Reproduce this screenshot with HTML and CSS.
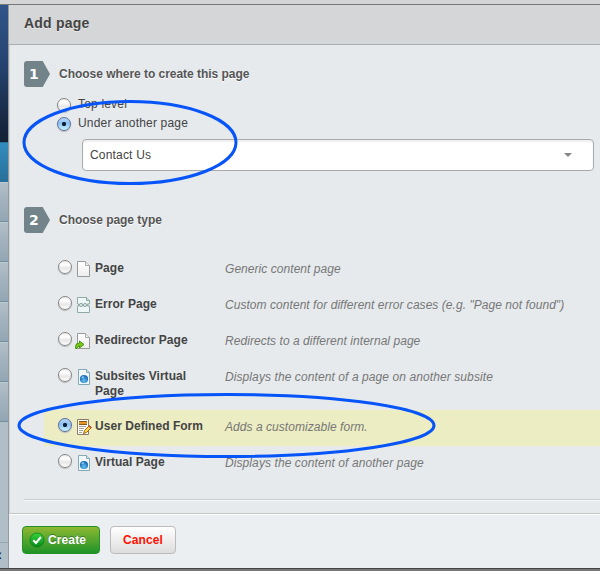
FILE: index.html
```
<!DOCTYPE html>
<html lang="en">
<head>
<meta charset="utf-8">
<title>Add page</title>
<link rel="stylesheet" href="styles.css">
</head>
<body>
<svg class="defs" width="0" height="0">
  <defs>
    <linearGradient id="paper" x1="0" y1="0" x2="0" y2="1"><stop offset="0" stop-color="#fff"/><stop offset="1" stop-color="#eee"/></linearGradient>
    <linearGradient id="green" x1="0" y1="0" x2="0" y2="1"><stop offset="0" stop-color="#35d43b"/><stop offset="1" stop-color="#078b1b"/></linearGradient>
    <radialGradient id="globe" cx=".5" cy=".7"><stop offset="0" stop-color="#5fc8f5"/><stop offset="1" stop-color="#2470b8"/></radialGradient>
    <symbol id="sheet" viewBox="0 0 16 16"><path d="M1.500.5h8l4 4v11h-12z" fill="url(#paper)" stroke="#999"/><path d="M9.500.5v4h4" fill="#eee" stroke="#aaa"/></symbol>
    <symbol id="virtual" viewBox="0 0 16 16"><path d="M2.500.5h8l3 3v12h-11z" fill="#f1f8fa" stroke="#86a8b3"/><path d="M10.500.5v3h3" fill="#d3e5e9" stroke="#86a8b3"/><circle cx="8" cy="10" r="4.100" fill="url(#globe)"/><path d="M5 8.500l2-1.500 1.500 1-1.500 1.500z" fill="#87c4ed"/></symbol>
  </defs>
</svg>
<div class="strip"></div>
<div class="main">
  <div class="menu">
    <div class="brand"></div><div class="item active"></div><div class="item"></div><div class="item"></div><div class="item"></div><div class="item"></div><div class="item"></div><div class="item"></div><div class="rest"></div><div class="toggle"><span>«</span></div>
  </div>
  <div class="dialog">
    <header><h1>Add page</h1></header>
    <form>
      <div class="step"><span class="num">1</span><h2>Choose where to create this page</h2></div>
      <div class="parents">
        <label><i class="radio"></i><span>Top level</span></label>
        <label><i class="radio on"></i><span>Under another page</span></label>
        <div class="select"><span>Contact Us</span><i class="arrow"></i></div>
      </div>
      <div class="step second"><span class="num">2</span><h2>Choose page type</h2></div>
      <div class="types">
        <label class="row"><i class="radio"></i><svg class="icon"><use href="#sheet"/></svg><b>Page</b><em>Generic content page</em></label>
        <label class="row"><i class="radio"></i><svg class="icon" viewBox="0 0 16 16"><path d="M1.500.5h9l3 3v12h-12z" fill="#eff7f6" stroke="#91aaa8"/><path d="M10.500.5v3h3" fill="#ccdfdd" stroke="#8ba6a3"/><path d="M1 6h13v4H1z" fill="#d1dedd"/><path d="M1 6l2 2 2-2 2 2 2-2 2 2 3-2M1 10l2-2 2 2 2-2 2 2 2-2 3 2" fill="none" stroke="#93aaa9"/></svg><b>Error Page</b><em>Custom content for different error cases (e.g. "Page not found")</em></label>
        <label class="row"><i class="radio"></i><svg class="icon redirect" viewBox="0 0 16 16"><path d="M1.500.5h8l4 4v11h-12z" fill="url(#paper)" stroke="#999"/><path d="M9.500.5v4h4" fill="#eee" stroke="#aaa"/><path d="M-.5 15.500v-2q0-3.500 4-3.500V8l4.500 3.500-4.500 3.500v-2q-2 0-2.500 2.500z" fill="#7cc51c" stroke="#499512"/></svg><b>Redirector Page</b><em>Redirects to a different internal page</em></label>
        <label class="row tall"><i class="radio"></i><svg class="icon"><use href="#virtual"/></svg><b>Subsites Virtual Page</b><em class="wide">Displays the content of a page on another subsite</em></label>
        <label class="row selected"><i class="radio on"></i><svg class="icon" viewBox="0 0 16 16"><path d="M1.500.5h11v15h-11z" fill="#fffdf7" stroke="#8a7c69"/><path d="M3 2h8v3H3z" fill="#e59523"/><path d="M3 2.500h8M3 5.500h8" stroke="#865820"/><path d="M3 7.500h7M3 9.500h5M3 11.500h4M3 13.500h3" stroke="#aaa49a"/><path d="M7.500 14.500l1-3 5-5 2 2-5 5z" fill="#ffd445" stroke="#a5631c"/><path d="M13 7l2 2" stroke="#de4c40" stroke-width="1.500"/></svg><b>User Defined Form</b><em>Adds a customizable form.</em></label>
        <label class="row"><i class="radio"></i><svg class="icon"><use href="#virtual"/></svg><b>Virtual Page</b><em class="wide">Displays the content of another page</em></label>
      </div>
    </form>
    <footer>
      <button class="create" type="button"><svg width="16" height="16" viewBox="0 0 16 16"><circle cx="8" cy="8" r="7" fill="url(#green)" stroke="#087618" stroke-width=".7"/><path d="M4.300 8.200l2.700 2.800 4.900-6" fill="none" stroke="#fff" stroke-width="2"/></svg><span>Create</span></button>
      <button class="cancel" type="button"><span>Cancel</span></button>
    </footer>
  </div>
</div>
<div class="bottom"></div>
<svg class="marks" width="600" height="571" fill="none" stroke="#0755f8" stroke-width="3"><ellipse cx="130" cy="142.500" rx="106" ry="41"/><ellipse cx="226.500" cy="425.500" rx="207.500" ry="31"/></svg>
</body>
</html>
```
FILE: styles.css
```
* { box-sizing: border-box; }
body { margin: 0; width: 600px; height: 571px; overflow: hidden; position: relative; font: 12px/15px "Liberation Sans", Arial, sans-serif; color: #444; background: #e6eaed; }
.defs { position: absolute; }
.strip { height: 5px; background: #d5d5d5; border-bottom: 1px solid #777; }
.main { display: flex; height: 563px; }
.menu { width: 8px; background: #b0bec7; overflow: hidden; display: flex; flex-direction: column; }
.brand { height: 137px; background: linear-gradient(#30558b, #25426e 45%, #142238 95%); }
.item { height: 40px; flex: none; background: linear-gradient(#b0bec7, #92a5b2); border-bottom: 1px solid #718fa0; border-top: 1px solid #bac9d2; }
.item.active { background: linear-gradient(#338dc1, #287099); border-color: #287099; }
.rest { flex: 1; }
.toggle { height: 26px; border-top: 1px solid #93a5af; position: relative; }
.toggle span { position: absolute; right: 6px; top: 4px; font-size: 16px; font-weight: bold; color: #17233e; }
.dialog { flex: 1; border-left: 1px solid #999; box-shadow: inset 1px 0 #ced3d6; display: flex; flex-direction: column; }
header { height: 40px; padding: 10px 0 0 15px; background: #d5d6d7; border-bottom: 1px solid #aaadb1; }
h1 { margin: 0; font-size: 14px; line-height: 17px; color: #444; letter-spacing: .2px; text-shadow: 0 1px #e8e8e8; }
form { height: 468px; padding: 16px 0 0 15px; }
.step { display: flex; height: 26px; align-items: center; }
.num { width: 26px; height: 26px; padding-left: 5px; font: bold 14px/26px "DejaVu Sans", sans-serif; color: #fff; background: #728389; border-radius: 3px 0 0 3px; clip-path: polygon(0 0, 72% 0, 100% 50%, 72% 100%, 0 100%); }
h2 { margin: 0 0 0 9px; font-size: 12px; line-height: 15px; color: #555; letter-spacing: -.03px; text-shadow: 0 1px #fff; }
.parents { padding: 9px 0 0 33px; }
.parents label { display: flex; height: 19px; align-items: flex-start; }
.parents label span { margin: 1px 0 0 7px; letter-spacing: .18px; }
.radio { flex: none; width: 14px; height: 14px; border: 1px solid #858585; border-radius: 50%; background: linear-gradient(#eee, #fff 30%, #e7e7e7 60%, #fff); box-shadow: 0 1px 1px #bbb; }
.radio.on { border-color: #5d6c9b; background: radial-gradient(circle, #10213c 0 1.8px, transparent 2.500px), linear-gradient(#b4d6f6, #8dc1f0 45%, #c8f3ff); }
.parents .radio { margin-top: 2px; }
.select { width: 512px; height: 32px; margin: 5px 0 0 25px; padding: 0 21px 0 7px; border: 1px solid #aaa; border-radius: 4px; background: #fff; box-shadow: inset 0 2px 2px #eee; letter-spacing: .18px; display: flex; align-items: center; justify-content: space-between; }
.arrow { border: 4px solid transparent; border-top-color: #888; border-bottom: 0; margin-top: -1px; }
.second { margin-top: 36px; }
.types { margin-top: 19px; height: 248px; border-bottom: 1px solid #c9ced2; box-shadow: 0 1px #f5f7f8; }
.row { display: flex; height: 36px; margin-left: 20px; padding: 8px 0 0 14px; align-items: flex-start; }
.row.tall { height: 50px; }
.row.selected { background: #ecedc2; }
.icon { flex: none; width: 16px; height: 16px; margin: 1px 0 0 4px; }
.icon.redirect { overflow: visible; }
.row b { width: 111px; margin: 1px 19px 0 3px; flex: none; color: #444; letter-spacing: .04px; }
.row em { white-space: nowrap; color: #777; padding-top: 2px; letter-spacing: .05px; }
.row .wide { letter-spacing: .09px; }
footer { height: 55px; border-top: 1px solid #c4c8ca; box-shadow: inset 0 1px #fff; background: #ebeff2; padding: 12px 0 0 13px; display: flex; gap: 10px; }
button { height: 28px; border-radius: 4px; padding: 0; font: bold 12px/15px "Liberation Sans", sans-serif; letter-spacing: .12px; display: flex; align-items: center; }
.create { width: 78px; padding-left: 6px; gap: 3px; border: 1px solid #269028; background: linear-gradient(#8db832, #1f9328); color: #fff; text-shadow: 0 -1px #36782b; }
.cancel { width: 66px; justify-content: center; color: #f10; border: 1px solid #bbb; background: linear-gradient(#fff, #ddd); }
.bottom { height: 3px; background: #777; border-top: 1px solid #444; }
.marks { position: absolute; left: 0; top: 0; }
```
